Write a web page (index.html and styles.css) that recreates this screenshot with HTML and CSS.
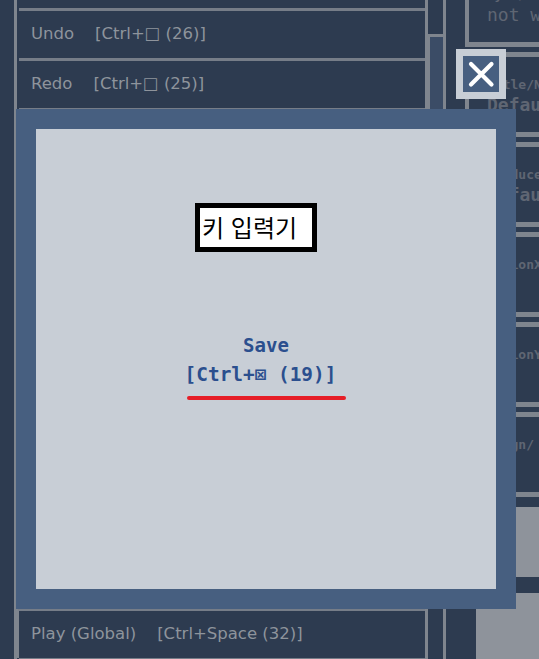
FILE: index.html
```html
<!DOCTYPE html>
<html lang="ko">
<head>
<meta charset="utf-8">
<title>키 입력기</title>
<link rel="stylesheet" href="styles.css">
</head>
<body>
<div class="app">
  <div class="gutter"></div>
  <div class="list">
    <div class="list-inner">
      <div class="row"></div>
      <div class="row"><span class="name">Undo</span><span class="key">[Ctrl+□ (26)]</span></div>
      <div class="row"><span class="name">Redo</span><span class="key">[Ctrl+□ (25)]</span></div>
      <div class="row"><span class="name">Cut</span><span class="key">[Ctrl+□ (24)]</span></div>
      <div class="row"><span class="name">Copy</span><span class="key">[Ctrl+□ (23)]</span></div>
      <div class="row"><span class="name">Paste</span><span class="key">[Ctrl+□ (22)]</span></div>
      <div class="row"><span class="name">Delete</span><span class="key">[Del (21)]</span></div>
      <div class="row"><span class="name">Select All</span><span class="key">[Ctrl+□ (20)]</span></div>
      <div class="row"><span class="name">Save</span><span class="key">[Ctrl+□ (19)]</span></div>
      <div class="row"><span class="name">Open</span><span class="key">[Ctrl+□ (18)]</span></div>
      <div class="row"><span class="name">New</span><span class="key">[Ctrl+□ (17)]</span></div>
      <div class="row"><span class="name">Find</span><span class="key">[Ctrl+□ (16)]</span></div>
      <div class="row"><span class="name">Stop</span><span class="key">[Esc (15)]</span></div>
      <div class="row row-active"><span class="name">Play (Global)</span><span class="key">[Ctrl+Space (32)]</span></div>
      <div class="row"></div>
    </div>
  </div>
  <div class="scroll"><div class="thumb"></div></div>
  <div class="panel">
    <div class="box"><div class="label">Sync/Mode</div><div class="value value-plain">not working</div></div>
    <div class="box"><div class="label">Title/Name</div><div class="value">Default</div></div>
    <div class="box"><div class="label">Produce/By</div><div class="value">Default</div></div>
    <div class="box"><div class="label">MotionX/</div><div class="value">0</div></div>
    <div class="box"><div class="label">MotionY/</div><div class="value">0</div></div>
    <div class="box"><div class="label">Align/</div><div class="value">0</div></div>
    <div class="block block-a"></div>
    <div class="block block-b"></div>
  </div>
</div>

<button class="close" aria-label="닫기">
  <span class="close-inner">
    <svg width="36" height="36" viewBox="0 0 36 36"><path d="M8 8 L28.5 28.5 M28.5 8 L8 28.5" stroke="#ffffff" stroke-width="4.2" stroke-linecap="round" fill="none"/></svg>
  </span>
</button>

<div class="modal">
  <div class="modal-inner">
    <div class="title">키 입력기</div>
    <div class="shortcut">
      <div class="sc-name">Save</div>
      <div class="sc-key">[Ctrl+⊠ (19)]</div>
      <div class="underline"></div>
    </div>
  </div>
</div>
</body>
</html>
```
FILE: styles.css
```css
html, body {
  margin: 0;
  padding: 0;
}
body {
  width: 539px;
  height: 659px;
  overflow: hidden;
  background: #2d3b50;
  position: relative;
  font-family: "DejaVu Sans", sans-serif;
}
.app {
  display: flex;
  height: 659px;
  width: 800px;
}
.gutter {
  width: 14px;
  flex-shrink: 0;
}
.list {
  width: 408px;
  flex-shrink: 0;
  border-left: 3px solid #7f858e;
  overflow: hidden;
  height: 659px;
}
.list-inner {
  margin-top: -42px;
}
.row {
  box-sizing: border-box;
  height: 50px;
  margin-left: 2px;
  border-top: 3px solid #767d88;
  display: flex;
  align-items: center;
  padding-left: 12px;
  padding-bottom: 2px;
  color: #8e949c;
  font-size: 16.5px;
  white-space: nowrap;
}
.row-active {
  margin-left: 0;
  border-left: 2px solid #7f858e;
}
.key {
  margin-left: 21px;
}
.scroll {
  width: 15px;
  flex-shrink: 0;
  border-left: 3px solid #7f858e;
  border-right: 3px solid #7f858e;
  height: 659px;
}
.thumb {
  margin-top: 34px;
  height: 566px;
  border-top: 3px solid #7f858e;
  border-left: 2px solid #7f858e;
  background: #3b4c66;
}
.panel {
  margin-left: 19px;
  width: 200px;
  flex-shrink: 0;
  display: flex;
  flex-direction: column;
  gap: 5px;
  height: 659px;
  overflow: hidden;
}
.box {
  flex-shrink: 0;
  box-sizing: border-box;
  height: 85px;
  border: 5px solid #7f858e;
  border-left-width: 4px;
  padding: 20px 0 0 18px;
  font-family: "DejaVu Sans Mono", monospace;
  color: #5f6673;
  white-space: nowrap;
  overflow: hidden;
}
.box:first-child {
  margin-top: -38px;
}
.label {
  font-size: 13px;
  line-height: 16px;
  font-weight: bold;
}
.value {
  margin-top: 1px;
  font-size: 18px;
  line-height: 21px;
  font-weight: bold;
}
.value-plain {
  font-weight: normal;
}
.block {
  flex-shrink: 0;
  background: #8e939b;
  margin-left: 11px;
}
.block-a {
  margin-top: 5px;
  height: 70px;
}
.block-b {
  margin-top: 11px;
  height: 100px;
}
.close {
  position: absolute;
  left: 456px;
  top: 49px;
  width: 50px;
  height: 50px;
  margin: 0;
  padding: 7px;
  border: 0;
  background: #c8ced6;
  box-sizing: border-box;
}
.close-inner {
  display: block;
  width: 36px;
  height: 36px;
  background: #475f80;
}
.close-inner svg {
  display: block;
}
.modal {
  position: absolute;
  left: 16px;
  top: 109px;
  width: 500px;
  height: 500px;
  box-sizing: border-box;
  padding: 20px;
  background: #475f80;
}
.modal-inner {
  width: 460px;
  height: 460px;
  background: #c8ced6;
  overflow: hidden;
}
.title {
  box-sizing: border-box;
  width: 122px;
  height: 49px;
  margin: 74px 0 0 159px;
  border: 5px solid #000000;
  background: #ffffff;
  padding-left: 2px;
  font-family: "Noto Sans CJK KR", sans-serif;
  font-size: 24px;
  line-height: 38px;
  color: #000000;
  white-space: nowrap;
}
.shortcut {
  margin-top: 78px;
  text-align: center;
  font-family: "DejaVu Sans Mono", monospace;
  font-weight: bold;
  font-size: 19px;
  line-height: 30px;
  color: #2b4f8e;
}
.sc-key {
  font-size: 19.4px;
  padding-right: 11px;
}
.underline {
  width: 159px;
  height: 4px;
  border-radius: 2px;
  background: #e61e27;
  margin: 6px auto 0;
}
```
